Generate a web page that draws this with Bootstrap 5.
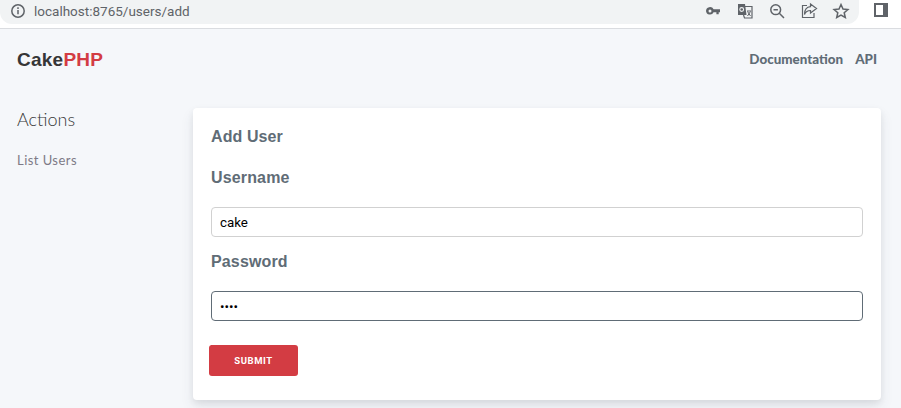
<!DOCTYPE html>
<html lang="en">
<head>
<meta charset="utf-8">
<title>Add User</title>
<link href="https://cdn.jsdelivr.net/npm/bootstrap@5.3.0/dist/css/bootstrap.min.css" rel="stylesheet">
<style>
html,body{height:408px;overflow:hidden}
body{background:#f5f7fa;font-family:"Liberation Sans",sans-serif}
.chrome-bar{height:29px;background:#fff;border-bottom:1px solid #dadce0}
.url-pill{width:859px;height:24px;background:#f1f3f4;border-radius:0 0 12px 12px;padding:0 9px 3px 10px}
.url-text{font:13.5px/20px Roboto,sans-serif;color:#5f6368;margin-left:8px}
.tool-ic{display:block;width:18px;height:18px;fill:none;stroke:#5f6368;stroke-width:1.5}
.tool-row{gap:14px}
.side-ic{width:14px;height:14px;border:2px solid #5f6368;border-right-width:5px;margin:3px 13px 0 15px;background:#fff}
.top-nav{height:61px;padding:0 24px 0 17px}
.brand-name{font:700 19px/1 "Liberation Sans",sans-serif;color:#363637;letter-spacing:.25px;text-decoration:none}
.brand-name span{color:#d33c43}
.top-link{font:900 13.4px/1 Lato,sans-serif;color:#606c76;text-decoration:none}
.page-cols{padding:18px 20px 0 17px}
.side-col{width:176px;flex:none}
.side-title{font:300 18px/22px Lato,sans-serif;color:#363637;margin:0 0 18px}
.side-link{font:400 13px/16px Lato,sans-serif;color:#7d7a86;text-decoration:none;letter-spacing:.45px}
.form-card{width:688px;height:292px;background:#fff;border-radius:4px;box-shadow:0 7px 14px rgba(60,66,87,.09),0 3px 6px rgba(0,0,0,.07);padding:19px 18px 0}
.form-title{font-size:16px;line-height:20px;font-weight:700;color:#606c76;margin:0 0 21px;letter-spacing:.1px}
.field-label{display:block;font-size:16px;line-height:20px;font-weight:700;color:#606c76;margin:0 0 19px;letter-spacing:.15px}
.field-input{display:block;width:100%;height:30px;border:1px solid #d1d1d1;border-radius:4px;padding:0 8px;font:13.33px Roboto,sans-serif;color:#000;outline:0;margin-bottom:15px}
.field-input.is-on{border-color:#606c76;margin-bottom:24px}
.send-btn{display:block;width:89px;height:31px;background:#d33c43;border:0;border-radius:3px;margin-left:-2px;color:#fff;font:700 9.5px Roboto,sans-serif;letter-spacing:.55px;padding:0}
</style>
</head>
<body>
<div class="chrome-bar d-flex align-items-start">
  <div class="url-pill d-flex align-items-center justify-content-between">
    <div class="d-flex align-items-center">
      <svg width="16" height="16" viewBox="0 0 16 16" fill="none" stroke="#5f6368" stroke-width="1.5"><circle cx="8" cy="8" r="6.200"/><path d="M8 7v4.300M8 4.200v1.700"/></svg>
      <span class="url-text">localhost:8765/users/add</span>
    </div>
    <div class="d-flex align-items-center tool-row">
      <svg class="tool-ic" viewBox="0 0 18 18"><path d="M2 9a4 4 0 0 1 7.600-1.700H16v3h-1.300v1.900h-2.300v-1.900H9.600A4 4 0 0 1 2 9z" fill="#5f6368" stroke="none"/><circle cx="6" cy="9" r="1.500" fill="#f1f3f4" stroke="none"/></svg>
      <svg class="tool-ic" viewBox="0 0 18 18"><path d="M9 4.500h7V16H8.500L7.500 13" stroke-width="1.200"/><path d="M2 2h7l1.500 11H2z" fill="#5f6368" stroke="none"/><circle cx="5.700" cy="7.500" r="1.900" stroke="#f1f3f4" stroke-width="1.100"/><path d="M11 9h4M11.500 14l3-4.500M11.500 9.500l3 4.500" stroke-width="1"/></svg>
      <svg class="tool-ic" viewBox="0 0 18 18"><circle cx="7.700" cy="7.700" r="4.900"/><path d="M11.300 11.300L16 16M5.500 7.700h4.400"/></svg>
      <svg class="tool-ic" viewBox="0 0 18 18"><path d="M7 3.500H2.500V15.500H14V11" stroke-width="1.200"/><path d="M10.500 2L16.500 6.500l-6 4.500V8.500C7.500 8.500 5.500 10 4.500 12.500 4.500 8 7 5 10.500 4.700z" stroke-width="1.200"/></svg>
      <svg class="tool-ic" viewBox="0 0 18 18"><path d="M9 2.500l2 4.500 4.900.5-3.700 3.200 1.100 4.800L9 13l-4.300 2.500 1.100-4.800-3.700-3.200L7 7z"/></svg>
    </div>
  </div>
  <div class="side-ic"></div>
</div>
<nav class="top-nav d-flex align-items-center justify-content-between">
  <a class="brand-name" href="#">Cake<span>PHP</span></a>
  <div class="d-flex gap-2">
    <a class="top-link me-1" href="#">Documentation</a>
    <a class="top-link" href="#">API</a>
  </div>
</nav>
<main class="page-cols d-flex">
  <aside class="side-col">
    <h4 class="side-title">Actions</h4>
    <a class="side-link" href="#">List Users</a>
  </aside>
  <form class="form-card" onsubmit="return false">
    <h3 class="form-title">Add User</h3>
    <label class="field-label" for="u">Username</label>
    <input class="field-input" id="u" type="text" value="cake">
    <label class="field-label" for="p">Password</label>
    <input class="field-input is-on" id="p" type="password" value="cake">
    <button class="send-btn" type="submit">SUBMIT</button>
  </form>
</main>
<script src="https://cdn.jsdelivr.net/npm/bootstrap@5.3.0/dist/js/bootstrap.bundle.min.js"></script>
</body>
</html>
